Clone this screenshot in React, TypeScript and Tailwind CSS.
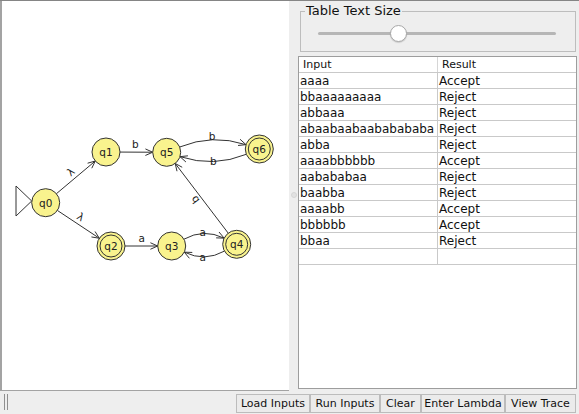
import React from "react";

type P = [number, number];
const N: Record<string, P> = {
  q0: [45.7, 202.7],
  q1: [106, 152],
  q5: [166.7, 152.3],
  q6: [259.3, 149],
  q2: [111, 246],
  q3: [171.7, 246],
  q4: [236.7, 244.3],
};
const FINAL = ["q2", "q4", "q6"];
const R = 14;

function arrowHead(tip: P, dir: P) {
  const len = Math.hypot(dir[0], dir[1]);
  const ux = dir[0] / len;
  const uy = dir[1] / len;
  const L = 8;
  const a = 0.42;
  const c = Math.cos(a);
  const s = Math.sin(a);
  const b1: P = [tip[0] - L * (ux * c - uy * s), tip[1] - L * (uy * c + ux * s)];
  const b2: P = [tip[0] - L * (ux * c + uy * s), tip[1] - L * (uy * c - ux * s)];
  return `M${b1[0]},${b1[1]} L${tip[0]},${tip[1]} L${b2[0]},${b2[1]}`;
}

function Straight({ a, b }: { a: string; b: string }) {
  const p = N[a];
  const q = N[b];
  const dx = q[0] - p[0];
  const dy = q[1] - p[1];
  const l = Math.hypot(dx, dy);
  const ux = dx / l;
  const uy = dy / l;
  const s: P = [p[0] + ux * R, p[1] + uy * R];
  const e: P = [q[0] - ux * R, q[1] - uy * R];
  return (
    <g stroke="#333" strokeWidth={1} fill="none">
      <path d={`M${s[0]},${s[1]} L${e[0]},${e[1]}`} />
      <path d={arrowHead(e, [ux, uy])} />
    </g>
  );
}

function Curved({ a, b, h }: { a: string; b: string; h: number }) {
  const p = N[a];
  const q = N[b];
  const dx = q[0] - p[0];
  const dy = q[1] - p[1];
  const l = Math.hypot(dx, dy);
  const ux = dx / l;
  const uy = dy / l;
  const nx = uy;
  const ny = -ux;
  const c: P = [(p[0] + q[0]) / 2 + nx * h, (p[1] + q[1]) / 2 + ny * h];
  const d1x = c[0] - p[0];
  const d1y = c[1] - p[1];
  const l1 = Math.hypot(d1x, d1y);
  const s: P = [p[0] + (d1x / l1) * R, p[1] + (d1y / l1) * R];
  const d2x = c[0] - q[0];
  const d2y = c[1] - q[1];
  const l2 = Math.hypot(d2x, d2y);
  const e: P = [q[0] + (d2x / l2) * R, q[1] + (d2y / l2) * R];
  return (
    <g stroke="#333" strokeWidth={1} fill="none">
      <path d={`M${s[0]},${s[1]} Q${c[0]},${c[1]} ${e[0]},${e[1]}`} />
      <path d={arrowHead(e, [e[0] - c[0], e[1] - c[1]])} />
    </g>
  );
}

function Label({ x, y, t, r = 0 }: { x: number; y: number; t: string; r?: number }) {
  return (
    <text
      x={x}
      y={y}
      transform={`rotate(${r} ${x} ${y})`}
      textAnchor="middle"
      dominantBaseline="central"
      fontSize={10.5}
      fontFamily="'DejaVu Sans', sans-serif"
      fill="#222"
    >
      {t}
    </text>
  );
}

function Graph() {
  return (
    <svg width={287} height={388} viewBox="2 1 287 388" className="block">
      <path d="M16,186 L16,216 L31.7,201 Z" fill="none" stroke="#333" strokeWidth={1} />
      <Straight a="q0" b="q1" />
      <Straight a="q0" b="q2" />
      <Straight a="q1" b="q5" />
      <Straight a="q2" b="q3" />
      <Straight a="q4" b="q5" />
      <Curved a="q5" b="q6" h={17} />
      <Curved a="q6" b="q5" h={17} />
      <Curved a="q3" b="q4" h={17} />
      <Curved a="q4" b="q3" h={17} />
      <Label x={70.7} y={171.7} t="λ" r={-40} />
      <Label x={80.7} y={216.7} t="λ" r={33} />
      <Label x={135.3} y={144} t="b" />
      <Label x={212} y={136} t="b" />
      <Label x={213.3} y={160.7} t="b" />
      <Label x={141.7} y={238.3} t="a" />
      <Label x={202.7} y={231.5} t="a" />
      <Label x={202.7} y={256.7} t="a" />
      <Label x={194.7} y={200} t="b" r={233} />
      {Object.entries(N).map(([k, [x, y]]) => (
        <g key={k}>
          <circle cx={x} cy={y} r={R} fill="#f9f38e" stroke="#333" strokeWidth={1} />
          {FINAL.includes(k) && <circle cx={x} cy={y} r={11} fill="none" stroke="#333" strokeWidth={1} />}
          <text
            x={x}
            y={y}
            textAnchor="middle"
            dominantBaseline="central"
            fontSize={10.5}
            fontFamily="'DejaVu Sans', sans-serif"
            fill="#222"
          >
            {k}
          </text>
        </g>
      ))}
    </svg>
  );
}

const ROWS: [string, string][] = [
  ["aaaa", "Accept"],
  ["bbaaaaaaaaa", "Reject"],
  ["abbaaa", "Reject"],
  ["abaabaabaababababa", "Reject"],
  ["abba", "Reject"],
  ["aaaabbbbbb", "Accept"],
  ["aabababaa", "Reject"],
  ["baabba", "Reject"],
  ["aaaabb", "Accept"],
  ["bbbbbb", "Accept"],
  ["bbaa", "Reject"],
  ["", ""],
];

const BTNS: [string, string][] = [
  ["Load Inputs", "w-[74px]"],
  ["Run Inputs", "w-[70px]"],
  ["Clear", "w-[41px]"],
  ["Enter Lambda", "w-[84px]"],
  ["View Trace", "w-[71px]"],
];

export default function App() {
  return (
    <div
      className="w-[579px] h-[414px] bg-[#eeeeee] flex flex-col overflow-hidden text-[#111]"
      style={{ fontFamily: "'DejaVu Sans', Verdana, sans-serif" }}
    >
      <div className="h-[391px] flex border-t border-[#858585]">
        <div className="w-[289px] h-full bg-white border-l-2 border-b border-[#a3a3a3] overflow-hidden">
          <Graph />
        </div>
        <div className="w-[9px] h-full flex flex-col items-center pt-[191px]">
          <div className="w-[6px] h-[6px] rounded-full bg-[#e2e2e2] border border-[#d6d6d6]" />
        </div>
        <div className="w-[281px] h-full flex flex-col">
          <fieldset className="ml-[2px] mt-[2px] w-[276px] h-[49px] border border-[#bdbdbd]">
            <legend className="ml-[4px] px-[1px] text-[13px] leading-[16px] text-[#111]">Table Text Size</legend>
            <div className="relative ml-[17px] mt-[13px] w-[238px] h-[3px] bg-[#b6b6b6] rounded-full">
              <div className="absolute left-[72px] top-[-7px] w-[17px] h-[17px] rounded-full bg-white border border-[#a8a8a8] shadow-[0_1px_1px_rgba(0,0,0,0.15)]" />
            </div>
          </fieldset>
          <div className="mt-[4px] w-[279px] h-[333px] bg-white border border-[#9d9d9d] flex flex-col">
            <div className="h-[16px] flex border-b border-[#c9c9c9] text-[11px] leading-[16px]">
              <div className="w-[139px] pl-[4px] border-r border-[#d6d6d6]">Input</div>
              <div className="flex-1 pl-[4px]">Result</div>
            </div>
            {ROWS.map(([a, b], i) => (
              <div key={i} className="h-[16px] flex border-b border-[#c9c9c9] text-[12px] leading-[16px]">
                <div className="w-[139px] pl-[1px] border-r border-[#c9c9c9] whitespace-nowrap overflow-hidden">{a}</div>
                <div className="flex-1 pl-[1px]">{b}</div>
              </div>
            ))}
          </div>
        </div>
      </div>
      <div className="h-[23px] flex items-start">
        <div className="ml-[4px] mt-[3px] flex gap-[2px]">
          <div className="w-[1px] h-[16px] bg-[#8f8f8f]" />
          <div className="w-[1px] h-[16px] bg-[#8f8f8f]" />
        </div>
        <div className="ml-auto mr-[3px] mt-[3px] flex">
          {BTNS.map(([t, w]) => (
            <div
              key={t}
              className={`${w} h-[19px] flex items-center justify-center bg-[#ebebeb] border border-[#bcbcbc] text-[11px] leading-none text-[#111] whitespace-nowrap`}
            >
              {t}
            </div>
          ))}
        </div>
      </div>
    </div>
  );
}
